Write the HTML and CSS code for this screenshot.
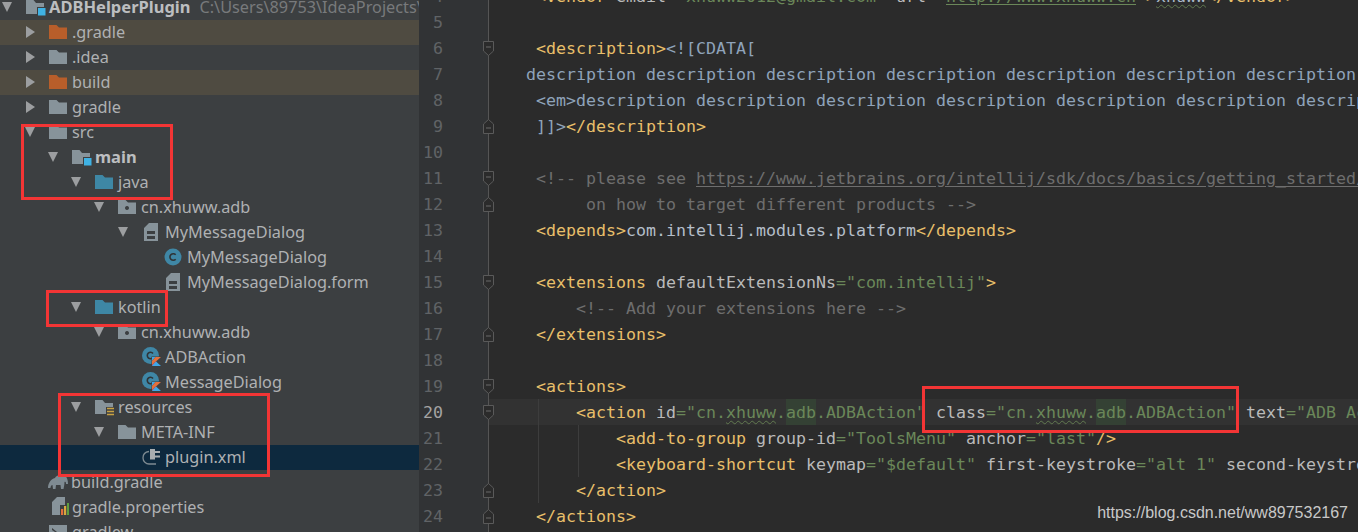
FILE: index.html
```html
<!DOCTYPE html>
<html lang="en">
<head>
<meta charset="utf-8">
<title>ADBHelperPlugin</title>
<link rel="stylesheet" href="styles.css">
</head>
<body>
<svg class="defs" width="0" height="0" aria-hidden="true">
  <symbol id="folder" viewBox="0 0 18 14"><path d="M0 0H7.500L10 2.500H18V14H0Z"/></symbol>
  <symbol id="module" viewBox="0 0 20 18"><path d="M0 0H7.500L10 3H18V7H11V14H0Z" fill="#87939a"/><rect x="12" y="8" width="7.500" height="7.500" fill="#3fb2e4"/></symbol>
  <symbol id="package" viewBox="0 0 18 14"><path fill-rule="evenodd" d="M0 0H7.500L10 2.500H18V14H0ZM9 6a2 2 0 1 0 .01 0Z" fill="#87939a"/></symbol>
  <symbol id="resource" viewBox="0 0 20 18"><path d="M0 0H7.500L10 3H18V7H11V14H0Z" fill="#87939a"/><path d="M12 8.500h7M12 11.500h7M12 14.500h7" stroke="#c9a243" stroke-width="1.500"/></symbol>
  <symbol id="form" viewBox="0 0 14 18"><path fill-rule="evenodd" d="M5 0H14V18H0V5ZM3 8V11H11V8ZM3 13V16H11V13Z" fill="#87939a"/></symbol>
  <symbol id="cls" viewBox="0 0 18 18"><circle cx="9" cy="9" r="8.500" fill="#3f87a6"/><path d="M11.700 6.800A3.300 3.300 0 1 0 11.700 11.200" fill="none" stroke="#2f3437" stroke-width="1.600"/></symbol>
  <symbol id="kcls" viewBox="0 0 20 20"><circle cx="8.500" cy="8.500" r="8.500" fill="#3f87a6"/><path d="M11 6.500A3.200 3.200 0 1 0 11 10.500" fill="none" stroke="#2f3437" stroke-width="1.600"/><path d="M9.500 9.500H19.500V19.500H9.500Z" fill="#3c3f41"/><path d="M10 10H13.500L10 14Z" fill="#3fa7e6"/><path d="M13.500 10H19L10 18V14Z" fill="#e4703c"/><path d="M10 18L14 14.500L14.800 15.500L10 19Z" fill="#d8568a"/><path d="M14 14.500L19 19H10Z" fill="#3fa7e6"/></symbol>
  <symbol id="plug" viewBox="0 0 20 20"><path d="M8 2H13V4H18V6H13V8.500H18V10.500H13V12.500H8Z" fill="#a8adb0"/><path d="M7 4.500C3 5 1 8 1 11C1 14.500 4 17 7 17H14" fill="none" stroke="#7f8b92" stroke-width="1.300"/></symbol>
  <symbol id="elephant" viewBox="0 0 20 15"><path d="M0 14C0 9 3 5 7 4C8 1 14 0 17 2C19 3 20 6 20 10L18 10C18 8 17.500 7.500 16.500 8C16.500 10 16 13 15.500 15H13L12.500 11H8L7.500 15H5L4.500 11C3 11 2.500 13 2.500 14Z" fill="#7f8b92"/></symbol>
  <symbol id="props" viewBox="0 0 17 19"><path d="M5 0H13V8H8V18H0V5Z" fill="#87939a"/><rect x="9" y="12" width="2.200" height="6" fill="#e4703c"/><rect x="12" y="9" width="2.200" height="9" fill="#d9a83f"/><rect x="15" y="6" width="2.200" height="12" fill="#5e9e3f"/></symbol>
  <symbol id="script" viewBox="0 0 18 14"><path fill-rule="evenodd" d="M0 0H18V14H0ZM3 3V5L6 7L3 9V11L8 7Z" fill="#87939a"/></symbol>
  <symbol id="fold-open" viewBox="0 0 11 15"><path d="M.5.500H10.500V10L5.500 14.500L.5 10Z" fill="#2b2b2b" stroke="#5a5a5a"/><path d="M3 6H8" stroke="#6a6a6a"/></symbol>
  <symbol id="fold-end" viewBox="0 0 11 15"><path d="M.5 14.500H10.500V5L5.500.5L.5 5Z" fill="#2b2b2b" stroke="#5a5a5a"/><path d="M3 9H8" stroke="#6a6a6a"/></symbol>
</svg>

<div class="window">
  <nav class="tree">
    <ul class="rows">
      <li class="row d0"><i class="arrow down"></i><svg class="ic ic-mod"><use href="#module"/></svg><b class="name">ADBHelperPlugin</b><span class="path">C:\Users\89753\IdeaProjects\ADBHelperPlugin</span></li>
      <li class="row d1 excluded"><i class="arrow right"></i><svg class="ic ic-folder orange"><use href="#folder"/></svg><span class="name">.gradle</span></li>
      <li class="row d1"><i class="arrow right"></i><svg class="ic ic-folder"><use href="#folder"/></svg><span class="name">.idea</span></li>
      <li class="row d1 excluded"><i class="arrow right"></i><svg class="ic ic-folder orange"><use href="#folder"/></svg><span class="name">build</span></li>
      <li class="row d1"><i class="arrow right"></i><svg class="ic ic-folder"><use href="#folder"/></svg><span class="name">gradle</span></li>
      <li class="row d1"><i class="arrow down"></i><svg class="ic ic-folder"><use href="#folder"/></svg><span class="name">src</span></li>
      <li class="row d2"><i class="arrow down"></i><svg class="ic ic-mod"><use href="#module"/></svg><b class="name">main</b></li>
      <li class="row d3"><i class="arrow down"></i><svg class="ic ic-folder blue"><use href="#folder"/></svg><span class="name">java</span></li>
      <li class="row d4"><i class="arrow down"></i><svg class="ic ic-folder"><use href="#package"/></svg><span class="name">cn.xhuww.adb</span></li>
      <li class="row d5"><i class="arrow down"></i><svg class="ic ic-form"><use href="#form"/></svg><span class="name">MyMessageDialog</span></li>
      <li class="row d6"><i class="arrow none"></i><svg class="ic ic-cls"><use href="#cls"/></svg><span class="name">MyMessageDialog</span></li>
      <li class="row d6"><i class="arrow none"></i><svg class="ic ic-form"><use href="#form"/></svg><span class="name">MyMessageDialog.form</span></li>
      <li class="row d3"><i class="arrow down"></i><svg class="ic ic-folder blue"><use href="#folder"/></svg><span class="name">kotlin</span></li>
      <li class="row d4"><i class="arrow down"></i><svg class="ic ic-folder"><use href="#package"/></svg><span class="name">cn.xhuww.adb</span></li>
      <li class="row d5"><i class="arrow none"></i><svg class="ic ic-k"><use href="#kcls"/></svg><span class="name">ADBAction</span></li>
      <li class="row d5"><i class="arrow none"></i><svg class="ic ic-k"><use href="#kcls"/></svg><span class="name">MessageDialog</span></li>
      <li class="row d3"><i class="arrow down"></i><svg class="ic ic-mod"><use href="#resource"/></svg><span class="name">resources</span></li>
      <li class="row d4"><i class="arrow down"></i><svg class="ic ic-folder"><use href="#folder"/></svg><span class="name">META-INF</span></li>
      <li class="row d5 selected"><i class="arrow none"></i><svg class="ic ic-k"><use href="#plug"/></svg><span class="name">plugin.xml</span></li>
      <li class="row d1"><i class="arrow none"></i><svg class="ic ic-ele"><use href="#elephant"/></svg><span class="name">build.gradle</span></li>
      <li class="row d1"><i class="arrow none"></i><svg class="ic ic-props"><use href="#props"/></svg><span class="name">gradle.properties</span></li>
      <li class="row d1"><i class="arrow none"></i><svg class="ic ic-folder"><use href="#script"/></svg><span class="name">gradlew</span></li>
    </ul>
  </nav>

  <main class="editor">
    <div class="gutter">
      <div class="ln">4</div>
      <div class="ln">5</div>
      <div class="ln">6<svg class="fold"><use href="#fold-open"/></svg></div>
      <div class="ln">7</div>
      <div class="ln">8</div>
      <div class="ln">9<svg class="fold"><use href="#fold-end"/></svg></div>
      <div class="ln">10</div>
      <div class="ln">11<svg class="fold"><use href="#fold-open"/></svg></div>
      <div class="ln">12<svg class="fold"><use href="#fold-end"/></svg></div>
      <div class="ln">13</div>
      <div class="ln">14</div>
      <div class="ln">15<svg class="fold"><use href="#fold-open"/></svg></div>
      <div class="ln">16</div>
      <div class="ln">17<svg class="fold"><use href="#fold-end"/></svg></div>
      <div class="ln">18</div>
      <div class="ln">19<svg class="fold"><use href="#fold-open"/></svg></div>
      <div class="ln now">20<svg class="fold"><use href="#fold-open"/></svg></div>
      <div class="ln">21</div>
      <div class="ln">22</div>
      <div class="ln">23<svg class="fold"><use href="#fold-end"/></svg></div>
      <div class="ln">24<svg class="fold"><use href="#fold-end"/></svg></div>
    </div>
    <div class="code">
<div class="line"> <span class="t">&lt;vendor</span> <span class="a">email</span><span class="s">="xhuww2012@gmail.com"</span> <span class="a">url</span><span class="s">="<u>http://www.xhuww.cn</u>"</span><span class="t">&gt;</span><span class="typo pl">xhuww</span><span class="t">&lt;/vendor&gt;</span></div>
<div class="line"></div>
<div class="line"> <span class="t">&lt;description&gt;</span><span class="x">&lt;![CDATA[</span></div>
<div class="line"><span class="x">description description description description description description description description description</span></div>
<div class="line"> <span class="x">&lt;em&gt;description description description description description description description description</span></div>
<div class="line"> <span class="x">]]&gt;</span><span class="t">&lt;/description&gt;</span></div>
<div class="line"></div>
<div class="line"> <span class="c">&lt;!-- please see <u>https://www.jetbrains.org/intellij/sdk/docs/basics/getting_started/plugin_compatibility.html</u></span></div>
<div class="line">      <span class="c">on how to target different products --&gt;</span></div>
<div class="line"> <span class="t">&lt;depends&gt;</span><span class="p">com.intellij.modules.platform</span><span class="t">&lt;/depends&gt;</span></div>
<div class="line"></div>
<div class="line"> <span class="t">&lt;extensions</span> <span class="a">defaultExtensionNs</span><span class="s">="com.intellij"</span><span class="t">&gt;</span></div>
<div class="line">     <span class="c">&lt;!-- Add your extensions here --&gt;</span></div>
<div class="line"> <span class="t">&lt;/extensions&gt;</span></div>
<div class="line"></div>
<div class="line"> <span class="t">&lt;actions&gt;</span></div>
<div class="line g1 now">     <span class="t">&lt;action</span> <span class="a">id</span><span class="s">="cn.<span class="typo">xhuww</span>.<mark>adb</mark>.ADBAction"</span> <span class="a">class</span><span class="s">="cn.<span class="typo">xhuww</span>.<mark>adb</mark>.ADBAction"</span> <span class="a">text</span><span class="s">="ADB Action"</span></div>
<div class="line g1 g2">         <span class="t">&lt;add-to-group</span> <span class="a">group-id</span><span class="s">="ToolsMenu"</span> <span class="a">anchor</span><span class="s">="last"</span><span class="t">/&gt;</span></div>
<div class="line g1 g2">         <span class="t">&lt;keyboard-shortcut</span> <span class="a">keymap</span><span class="s">="$default"</span> <span class="a">first-keystroke</span><span class="s">="alt 1"</span> <span class="a">second-keystroke</span><span class="s">="alt 2"</span><span class="t">/&gt;</span></div>
<div class="line g1">     <span class="t">&lt;/action&gt;</span></div>
<div class="line"> <span class="t">&lt;/actions&gt;</span></div>
    </div>
  </main>

  <div class="mark box-a"></div>
  <div class="mark box-b"></div>
  <div class="mark box-c"></div>
  <div class="mark box-d"></div>
  <div class="watermark">https://blog.csdn.net/ww897532167</div>
</div>
</body>
</html>
```
FILE: styles.css
```css
* { box-sizing: border-box; }
html, body { margin: 0; height: 100%; overflow: hidden; background: #2b2b2b; }
.defs { position: absolute; }

.window {
  position: relative;
  display: flex;
  width: 1358px;
  height: 532px;
  overflow: hidden;
}

/* project tree */
.tree {
  flex: 0 0 419px;
  height: 532px;
  overflow: hidden;
  background: #3c3f41;
  font-family: "Noto Sans", "Open Sans", sans-serif;
  font-size: 16.25px;
  color: #afb1b3;
}
.rows { list-style: none; margin: -5px 0 0; padding: 0; }
.row {
  display: flex;
  align-items: center;
  height: 25px;
  padding-bottom: 2px;
  white-space: nowrap;
}
.d0 { padding-left: 2px; }
.d1 { padding-left: 25px; }
.d2 { padding-left: 48px; }
.d3 { padding-left: 71px; }
.d4 { padding-left: 94px; }
.d5 { padding-left: 118px; }
.d6 { padding-left: 140px; }
.excluded { background: #4f4b41; }
.selected { background: #0d293e; }

.arrow { flex: 0 0 24px; height: 12px; display: block; }
.arrow.right::before {
  content: "";
  display: block;
  width: 0; height: 0;
  margin-left: 1px;
  border-top: 6px solid transparent;
  border-bottom: 6px solid transparent;
  border-left: 9px solid #9c9ea0;
}
.arrow.down::before {
  content: "";
  display: block;
  width: 0; height: 0;
  margin-top: 1px;
  border-left: 5px solid transparent;
  border-right: 5px solid transparent;
  border-top: 10px solid #9c9ea0;
}

.ic { flex: none; fill: #87939a; }
.ic-folder { width: 18px; height: 14px; margin-right: 5px; }
.ic-mod { width: 20px; height: 18px; margin-right: 3px; margin-top: 4px; }
.ic-form { width: 14px; height: 18px; margin: 0 7px 0 2px; }
.ic-cls { width: 18px; height: 18px; margin-right: 5px; }
.ic-k { width: 20px; height: 20px; margin-right: 3px; }
.ic-ele { width: 20px; height: 15px; margin-right: 3px; margin-left: -1px; }
.ic-props { width: 17px; height: 19px; margin: 0 3px 0 3px; }
.orange { fill: #b85e2a; }
.blue { fill: #3e87a5; }

.name { font-weight: 400; }
b.name { font-weight: 700; font-size: 16.5px; color: #bcbec0; }
.path { margin-left: 9px; color: #787a7c; }

/* editor */
.editor {
  flex: 1;
  display: flex;
  min-width: 0;
  height: 532px;
  overflow: hidden;
  font-family: "DejaVu Sans Mono", "Liberation Mono", monospace;
  font-size: 16.61px;
}
.gutter {
  flex: 0 0 70px;
  margin-top: -17px;
  height: 560px;
  background: #313335;
  border-right: 1px solid #555555;
  position: relative;
  z-index: 1;
}
.ln {
  position: relative;
  height: 26px;
  line-height: 28px;
  padding-right: 45px;
  text-align: right;
  color: #606366;
}
.ln.now { color: #a4a3a3; }
.fold { position: absolute; right: -6px; top: 6px; width: 11px; height: 15px; }

.code {
  flex: 1;
  min-width: 0;
  margin-top: -17px;
  overflow: hidden;
  background: #2b2b2b;
}
.line {
  height: 26px;
  line-height: 28px;
  padding-left: 37px;
  white-space: pre;
  color: #a9b7c6;
}
.line.now { background-color: #323232; }
.g1 { background-image: linear-gradient(#3d3d3d, #3d3d3d); background-size: 1px 100%; background-position: 49px 0; background-repeat: no-repeat; }
.g1.g2 { background-image: linear-gradient(#3d3d3d, #3d3d3d), linear-gradient(#3d3d3d, #3d3d3d); background-size: 1px 100%, 1px 100%; background-position: 49px 0, 89px 0; background-repeat: no-repeat; }

.t { color: #e8bf6a; }
.a { color: #bababa; }
.s { color: #6a8759; }
.x { color: #8fa3ba; }
.p { color: #b4bec9; }
.c { color: #6e6e6e; }
.c u, .s u { text-underline-offset: 2px; }
.typo { text-decoration: underline wavy #61794f 1px; text-underline-offset: 2px; }
.pl { color: #a9b7c6; }
mark { background: #344134; color: inherit; display: inline-block; height: 26px; line-height: 28px; }

/* annotations drawn on top of the screenshot */
.mark { position: absolute; border: 3px solid #f33535; z-index: 2; }
.box-a { left: 21px; top: 124px; width: 152px; height: 76px; }
.box-b { left: 46px; top: 290px; width: 122px; height: 37px; }
.box-c { left: 58px; top: 393px; width: 212px; height: 84px; }
.box-d { left: 922px; top: 386px; width: 317px; height: 47px; }
.watermark {
  position: absolute;
  right: 10px;
  top: 504px;
  z-index: 3;
  font-family: "Liberation Sans", Arial, sans-serif;
  font-size: 16px;
  line-height: 18px;
  color: #c8c8c8;
}
```
